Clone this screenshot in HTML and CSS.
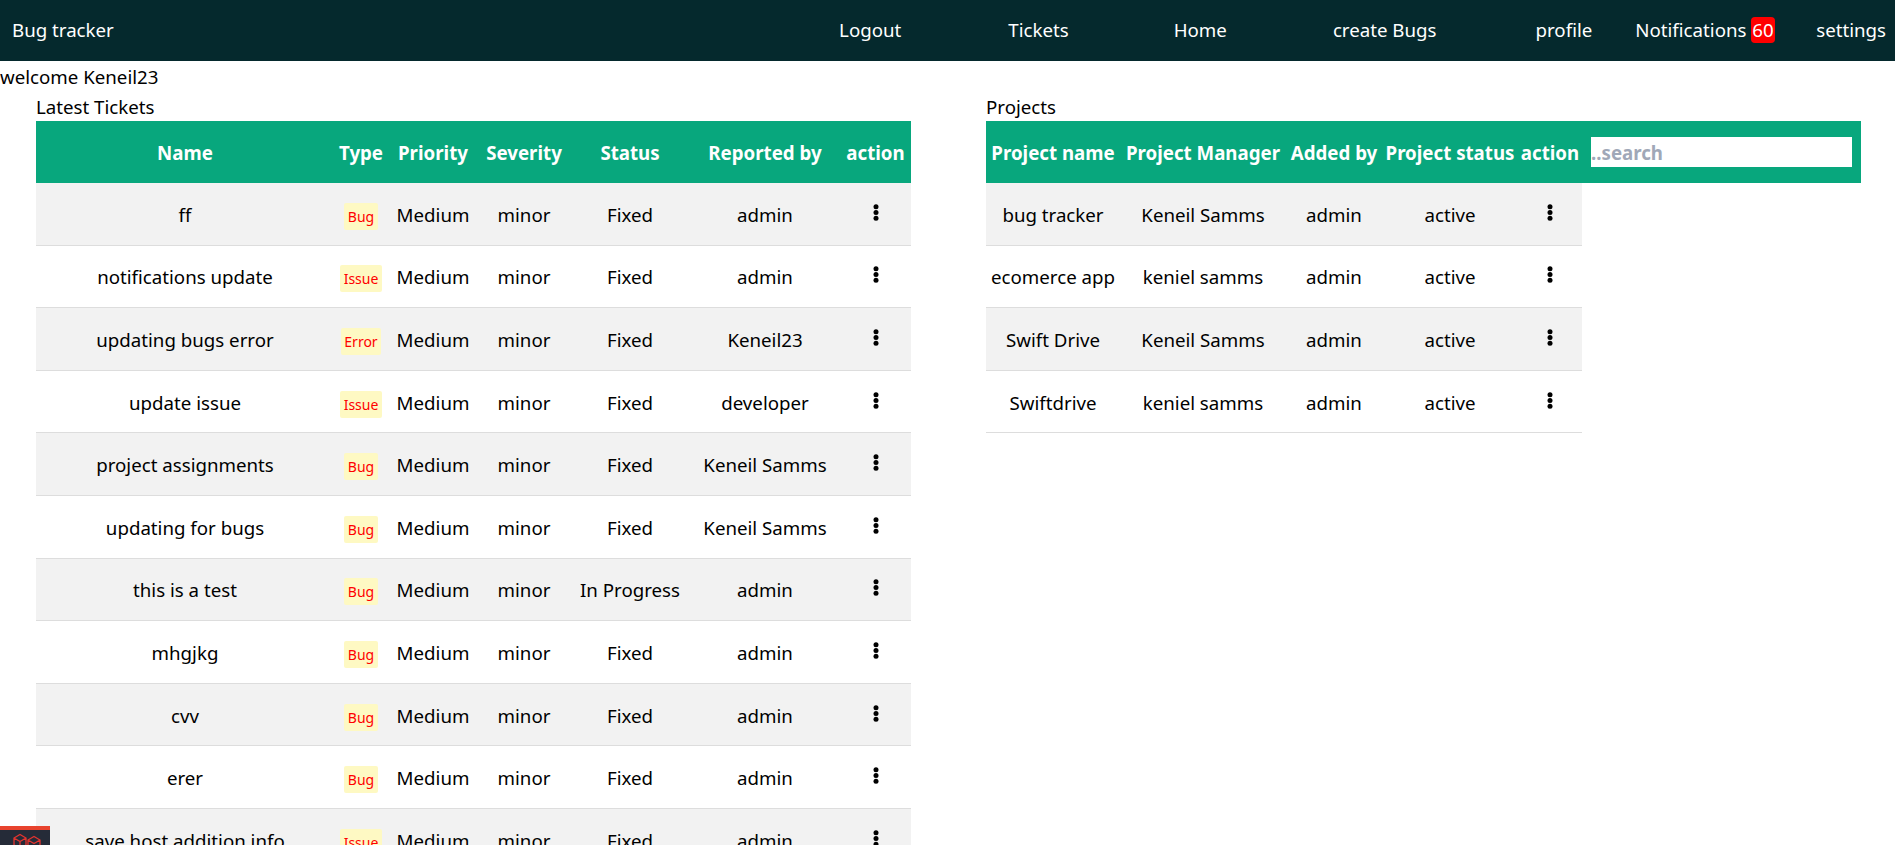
FILE: index.html
```html
<!DOCTYPE html>
<html>
<head>
  <title>Bug tracker</title>
  <link rel="stylesheet" href="styles.css">
</head>
<body>
  <nav class="navbar">
    <a class="brand" href="#">Bug tracker</a>
    <div class="nav-links">
      <a class="nav-wide" href="#">Logout</a>
      <a class="nav-wide" href="#">Tickets</a>
      <a class="nav-wide" href="#">Home</a>
      <a class="nav-wide" href="#">create Bugs</a>
      <a class="nav-small" href="#">profile</a>
      <a class="nav-small" href="#">Notifications <span class="count">60</span></a>
      <a class="nav-small" href="#">settings</a>
    </div>
  </nav>

  <p class="welcome">welcome Keneil23</p>

  <div class="panels">
    <section class="panel">
      <h2>Latest Tickets</h2>
      <table class="tickets">
        <colgroup>
          <col class="c-name"><col class="c-type"><col class="c-priority"><col class="c-severity">
          <col class="c-status"><col class="c-reporter"><col class="c-action">
        </colgroup>
        <thead>
          <tr><th>Name</th><th>Type</th><th>Priority</th><th>Severity</th><th>Status</th><th>Reported by</th><th>action</th></tr>
        </thead>
        <tbody>
          <tr><td>ff</td><td><span class="tag">Bug</span></td><td>Medium</td><td>minor</td><td>Fixed</td><td>admin</td><td><svg class="dots" viewBox="0 0 8 17"><circle cx="4" cy="2.8" r="2.5"/><circle cx="4" cy="8.5" r="2.5"/><circle cx="4" cy="14.2" r="2.5"/></svg></td></tr>
          <tr><td>notifications update</td><td><span class="tag">Issue</span></td><td>Medium</td><td>minor</td><td>Fixed</td><td>admin</td><td><svg class="dots" viewBox="0 0 8 17"><circle cx="4" cy="2.8" r="2.5"/><circle cx="4" cy="8.5" r="2.5"/><circle cx="4" cy="14.2" r="2.5"/></svg></td></tr>
          <tr><td>updating bugs error</td><td><span class="tag">Error</span></td><td>Medium</td><td>minor</td><td>Fixed</td><td>Keneil23</td><td><svg class="dots" viewBox="0 0 8 17"><circle cx="4" cy="2.8" r="2.5"/><circle cx="4" cy="8.5" r="2.5"/><circle cx="4" cy="14.2" r="2.5"/></svg></td></tr>
          <tr><td>update issue</td><td><span class="tag">Issue</span></td><td>Medium</td><td>minor</td><td>Fixed</td><td>developer</td><td><svg class="dots" viewBox="0 0 8 17"><circle cx="4" cy="2.8" r="2.5"/><circle cx="4" cy="8.5" r="2.5"/><circle cx="4" cy="14.2" r="2.5"/></svg></td></tr>
          <tr><td>project assignments</td><td><span class="tag">Bug</span></td><td>Medium</td><td>minor</td><td>Fixed</td><td>Keneil Samms</td><td><svg class="dots" viewBox="0 0 8 17"><circle cx="4" cy="2.8" r="2.5"/><circle cx="4" cy="8.5" r="2.5"/><circle cx="4" cy="14.2" r="2.5"/></svg></td></tr>
          <tr><td>updating for bugs</td><td><span class="tag">Bug</span></td><td>Medium</td><td>minor</td><td>Fixed</td><td>Keneil Samms</td><td><svg class="dots" viewBox="0 0 8 17"><circle cx="4" cy="2.8" r="2.5"/><circle cx="4" cy="8.5" r="2.5"/><circle cx="4" cy="14.2" r="2.5"/></svg></td></tr>
          <tr><td>this is a test</td><td><span class="tag">Bug</span></td><td>Medium</td><td>minor</td><td>In Progress</td><td>admin</td><td><svg class="dots" viewBox="0 0 8 17"><circle cx="4" cy="2.8" r="2.5"/><circle cx="4" cy="8.5" r="2.5"/><circle cx="4" cy="14.2" r="2.5"/></svg></td></tr>
          <tr><td>mhgjkg</td><td><span class="tag">Bug</span></td><td>Medium</td><td>minor</td><td>Fixed</td><td>admin</td><td><svg class="dots" viewBox="0 0 8 17"><circle cx="4" cy="2.8" r="2.5"/><circle cx="4" cy="8.5" r="2.5"/><circle cx="4" cy="14.2" r="2.5"/></svg></td></tr>
          <tr><td>cvv</td><td><span class="tag">Bug</span></td><td>Medium</td><td>minor</td><td>Fixed</td><td>admin</td><td><svg class="dots" viewBox="0 0 8 17"><circle cx="4" cy="2.8" r="2.5"/><circle cx="4" cy="8.5" r="2.5"/><circle cx="4" cy="14.2" r="2.5"/></svg></td></tr>
          <tr><td>erer</td><td><span class="tag">Bug</span></td><td>Medium</td><td>minor</td><td>Fixed</td><td>admin</td><td><svg class="dots" viewBox="0 0 8 17"><circle cx="4" cy="2.8" r="2.5"/><circle cx="4" cy="8.5" r="2.5"/><circle cx="4" cy="14.2" r="2.5"/></svg></td></tr>
          <tr><td>save host addition info</td><td><span class="tag">Issue</span></td><td>Medium</td><td>minor</td><td>Fixed</td><td>admin</td><td><svg class="dots" viewBox="0 0 8 17"><circle cx="4" cy="2.8" r="2.5"/><circle cx="4" cy="8.5" r="2.5"/><circle cx="4" cy="14.2" r="2.5"/></svg></td></tr>
        </tbody>
      </table>
    </section>

    <section class="panel">
      <h2>Projects</h2>
      <table class="projects">
        <colgroup>
          <col class="c-project"><col class="c-manager"><col class="c-added"><col class="c-pstatus">
          <col class="c-paction"><col class="c-search">
        </colgroup>
        <thead>
          <tr><th>Project name</th><th>Project Manager</th><th>Added by</th><th>Project status</th><th>action</th><th class="search-cell"><input class="search" type="text" placeholder="..search"></th></tr>
        </thead>
        <tbody>
          <tr><td>bug tracker</td><td>Keneil Samms</td><td>admin</td><td>active</td><td><svg class="dots" viewBox="0 0 8 17"><circle cx="4" cy="2.8" r="2.5"/><circle cx="4" cy="8.5" r="2.5"/><circle cx="4" cy="14.2" r="2.5"/></svg></td></tr>
          <tr><td>ecomerce app</td><td>keniel samms</td><td>admin</td><td>active</td><td><svg class="dots" viewBox="0 0 8 17"><circle cx="4" cy="2.8" r="2.5"/><circle cx="4" cy="8.5" r="2.5"/><circle cx="4" cy="14.2" r="2.5"/></svg></td></tr>
          <tr><td>Swift Drive</td><td>Keneil Samms</td><td>admin</td><td>active</td><td><svg class="dots" viewBox="0 0 8 17"><circle cx="4" cy="2.8" r="2.5"/><circle cx="4" cy="8.5" r="2.5"/><circle cx="4" cy="14.2" r="2.5"/></svg></td></tr>
          <tr><td>Swiftdrive</td><td>keniel samms</td><td>admin</td><td>active</td><td><svg class="dots" viewBox="0 0 8 17"><circle cx="4" cy="2.8" r="2.5"/><circle cx="4" cy="8.5" r="2.5"/><circle cx="4" cy="14.2" r="2.5"/></svg></td></tr>
        </tbody>
      </table>
    </section>
  </div>

  <div class="debug-tab">
    <svg class="debug-logo" viewBox="0 0 36 15" fill="none" stroke="#e3342f" stroke-width="1.3">
      <path d="M2 5 L8 1.5 L14 5 L14 12 L8 15.5 L2 12 Z M2 5 L8 8.5 L14 5 M8 8.5 L8 15.5"/>
      <path d="M16 7 L22 3.5 L28 7 L28 14 L22 17.5 L16 14 Z M16 7 L22 10.5 L28 7"/>
    </svg>
  </div>
</body>
</html>
```

FILE: styles.css
```css
html, body {
  margin: 0;
  padding: 0;
  height: 845px;
  overflow: hidden;
}

body {
  background-color: #fff;
  color: #000;
  font-family: "Noto Sans", sans-serif;
  font-size: 18.7px;
  line-height: 24px;
}

a {
  color: inherit;
  text-decoration: none;
}

.navbar {
  display: flex;
  align-items: center;
  justify-content: space-between;
  height: 59px;
  padding-bottom: 2px;
  background-color: #05292d;
  color: #fff;
}

.brand {
  margin-left: 12px;
}

.nav-links {
  display: flex;
  align-items: center;
  padding-right: 9px;
}

.nav-wide {
  margin-right: 105px;
}

.nav-wide:first-child {
  margin-right: 107px;
}

.nav-wide:nth-child(3) {
  margin-right: 106px;
}

.nav-small {
  margin-left: 43px;
}

.nav-small:last-child {
  margin-left: 41.5px;
}

.nav-wide + .nav-small {
  margin-left: -6px;
}

.count {
  display: inline-block;
  padding: 0 1px;
  background-color: #f00;
  border-radius: 4px;
  line-height: 26px;
}

.welcome {
  margin: 4px 0 0;
  height: 30px;
}

.panels {
  display: flex;
  gap: 75px;
  padding-left: 36px;
}

.panel {
  width: 875px;
}

.panel h2 {
  margin: 0;
  height: 26px;
  font-size: 18.7px;
  font-weight: 400;
}

table {
  width: 875px;
  table-layout: fixed;
  border-collapse: collapse;
  text-align: center;
}

th {
  height: 60px;
  padding: 2px 0 0;
  background-color: #08a77d;
  color: #fff;
  font-weight: 700;
  white-space: nowrap;
}

td {
  height: 59.6px;
  padding: 2px 0 0;
  border-bottom: 1px solid #ddd;
  white-space: nowrap;
}

tbody tr:nth-child(odd) td {
  background-color: #f2f2f2;
}

.c-name { width: 298px; }
.c-type { width: 54px; }
.c-priority { width: 90px; }
.c-severity { width: 92px; }
.c-status { width: 120px; }
.c-reporter { width: 150px; }
.c-action { width: 71px; }

.c-project { width: 134px; }
.c-manager { width: 166px; }
.c-added { width: 96px; }
.c-pstatus { width: 136px; }
.c-paction { width: 64px; }
.c-search { width: 279px; }

.search-cell {
  padding-top: 0;
  text-align: left;
}

.search {
  box-sizing: border-box;
  display: block;
  width: 261px;
  height: 30px;
  margin-left: 9px;
  padding: 0;
  border: none;
  outline: none;
  background-color: #fff;
  font-family: inherit;
  font-size: 18.7px;
  font-weight: 700;
}

.search::placeholder {
  color: #a0a8b8;
  opacity: 1;
}

.tag {
  display: inline-block;
  padding: 3px 3.5px 2px;
  background-color: #fef9c3;
  border-radius: 2px;
  color: #f00;
  font-size: 14px;
  line-height: 22px;
  vertical-align: -3px;
}

.dots {
  display: inline-block;
  width: 8px;
  height: 17px;
  fill: #000;
  vertical-align: 1px;
}

.debug-tab {
  position: fixed;
  left: 0;
  bottom: 0;
  width: 50px;
  height: 15px;
  border-top: 4px solid #e8432e;
  background-color: #252b38;
  overflow: hidden;
}

.debug-logo {
  display: block;
  width: 36px;
  height: 15px;
  margin: 3px 0 0 12px;
}
```
